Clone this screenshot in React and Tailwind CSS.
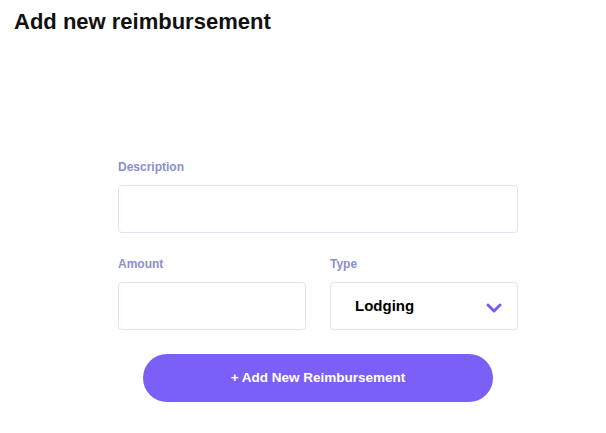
import React from 'react';

const font = { fontFamily: '"Liberation Sans", Arial, sans-serif' };

export default function App() {
  return (
    <div className="min-h-[433px] w-[606px] bg-white" style={font}>
      <h1 className="px-[14px] pt-[8px] text-[22px] font-bold leading-[28px] text-[#111]">Add new reimbursement</h1>

      <div className="ml-[118px] mt-[124px] w-[400px]">
        <label className="block text-[12px] font-bold leading-[14px] text-[#8b8fcf]">Description</label>
        <input className="mt-[11px] block h-[48px] w-full rounded-[4px] border border-[#e2e1f9] px-3 outline-none" />

        <div className="mt-[24px] grid grid-cols-2 gap-[24px]">
          <div>
            <label className="block text-[12px] font-bold leading-[14px] text-[#8b8fcf]">Amount</label>
            <input className="mt-[11px] block h-[48px] w-full rounded-[4px] border border-[#e2e1f9] px-3 outline-none" />
          </div>
          <div>
            <label className="block text-[12px] font-bold leading-[14px] text-[#8b8fcf]">Type</label>
            <div className="mt-[11px] flex h-[48px] w-full items-center justify-between rounded-[4px] border border-[#e2e1f9] pl-[24px] pr-[15px]">
              <span className="pt-[1px] text-[15px] font-bold text-black">Lodging</span>
              <svg width="16" height="12" viewBox="0 0 16 12" fill="none" className="mt-[3px]">
                <path d="M2 3 L8 9 L14 3" stroke="#7b5cf5" strokeWidth="3" strokeLinecap="round" strokeLinejoin="round" />
              </svg>
            </div>
          </div>
        </div>

        <div className="mt-[24px] flex justify-center">
          <button className="h-[48px] w-[350px] rounded-full bg-[#7c5ff6] text-[13.5px] font-bold text-white">
            + Add New Reimbursement
          </button>
        </div>
      </div>
    </div>
  );
}
